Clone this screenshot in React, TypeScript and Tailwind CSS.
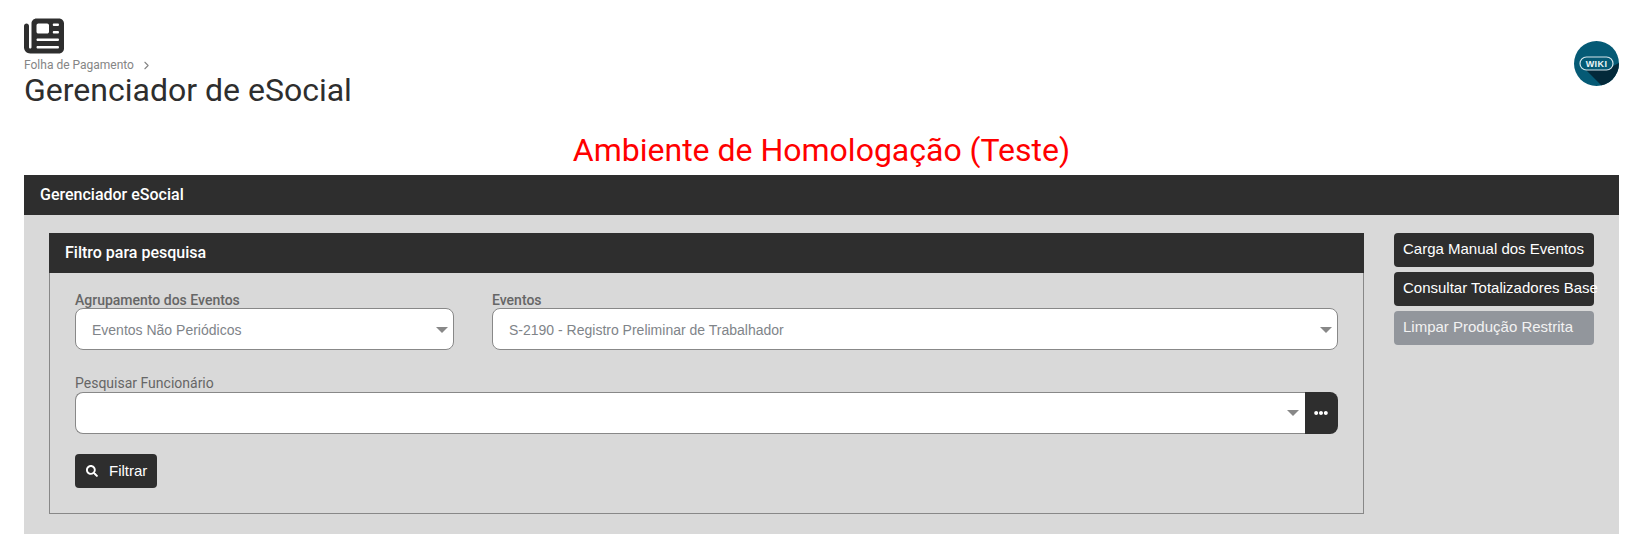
import React from 'react'
import { FaNewspaper } from 'react-icons/fa6'
import { FaSearch, FaEllipsisH } from 'react-icons/fa'
import { ChevronRight } from 'lucide-react'

const Caret = () => (
  <span className="w-0 h-0 border-x-[6px] border-x-transparent border-t-[6px] border-t-[#888888]" />
)

const WikiBadge = () => (
  <svg width="45" height="45" viewBox="0 0 45 45">
    <defs>
      <clipPath id="wiki-circle">
        <circle cx="22.5" cy="22.5" r="22.5" />
      </clipPath>
    </defs>
    <circle cx="22.5" cy="22.5" r="22.5" fill="#055a75" />
    <path d="M10 27 L35 27 L45 22 L45 45 L28 45 Z" fill="#03293a" clipPath="url(#wiki-circle)" />
    <rect x="6" y="16" width="33" height="13" rx="6.5" fill="#055a75" stroke="#d5e4ea" strokeWidth="1.2" />
    <text x="22.5" y="25.6" textAnchor="middle" fontSize="9" fontWeight="700" letterSpacing="0.4" fill="#eef5f7" fontFamily="'Liberation Sans', sans-serif">
      WIKI
    </text>
  </svg>
)

const actions = [
  { label: 'Carga Manual dos Eventos', color: 'bg-[#2e2e2e] text-white' },
  { label: 'Consultar Totalizadores Base', color: 'bg-[#2e2e2e] text-white' },
  { label: 'Limpar Produção Restrita', color: 'bg-[#92969c] text-[#f2f2f2]' },
]

const App: React.FC = () => {
  return (
    <div className="h-[534px] overflow-hidden bg-white pl-6 pr-[25px] font-['Roboto',sans-serif]">
      {/* Header */}
      <div className="flex justify-between h-[127px]">
        <div className="pt-4">
          <FaNewspaper className="w-10 h-10 text-[#2e2e2e]" />
          <div className="flex items-center h-[14px] mt-[2px] text-xs text-[#858585]">
            Folha de Pagamento
            <ChevronRight className="w-[13px] h-[13px] ml-[6px]" />
          </div>
          <h1 className="text-[32px] leading-[37px] text-[#2e2e2e]">Gerenciador de eSocial</h1>
        </div>
        <div className="pt-[41px]">
          <WikiBadge />
        </div>
      </div>

      <div className="h-12 pt-1 text-center text-[32px] leading-[38px] text-[#ff0000]">
        Ambiente de Homologação (Teste)
      </div>

      {/* Painel */}
      <div className="bg-[#d9d9d9] h-[359px]">
        <div className="h-10 flex items-center px-4 bg-[#2e2e2e] text-white text-base font-medium">
          Gerenciador eSocial
        </div>
        <div className="flex pt-[18px] pl-[25px]">
          <div className="w-[1315px] h-[281px] border border-[#888888] border-t-0">
            <div className="-mx-px h-10 flex items-center pl-4 bg-[#2e2e2e] text-white text-base font-medium">
              Filtro para pesquisa
            </div>
            <div className="px-[25px] pt-[19px]">
              <div className="flex gap-[38px]">
                <div className="w-[379px]">
                  <div className="h-[17px] text-sm leading-[17px] font-medium text-[#666666]">Agrupamento dos Eventos</div>
                  <div className="mt-[-1px] h-[42px] flex items-center justify-between pl-[16px] pr-[5px] pt-[1px] bg-white border border-[#888888] rounded-lg font-['Liberation_Sans',sans-serif] text-sm text-[#808489]">
                    Eventos Não Periódicos
                    <Caret />
                  </div>
                </div>
                <div className="flex-1">
                  <div className="h-[17px] text-sm leading-[17px] font-medium text-[#666666]">Eventos</div>
                  <div className="mt-[-1px] h-[42px] flex items-center justify-between pl-[16px] pr-[5px] pt-[1px] bg-white border border-[#888888] rounded-lg font-['Liberation_Sans',sans-serif] text-sm text-[#808489]">
                    S-2190 - Registro Preliminar de Trabalhador
                    <Caret />
                  </div>
                </div>
              </div>

              <div className="mt-[25px] h-[17px] text-sm leading-[17px] text-[#666666]">Pesquisar Funcionário</div>
              <div className="flex h-[42px]">
                <div className="flex-1 flex items-center justify-end pr-[6px] bg-white border border-[#888888] border-r-0 rounded-l-lg">
                  <Caret />
                </div>
                <div className="w-[33px] pr-[2px] flex items-center justify-center bg-[#2e2e2e] text-white rounded-r-lg">
                  <FaEllipsisH className="w-[14px] h-[14px]" />
                </div>
              </div>

              <button className="mt-5 w-[82px] h-[34px] flex items-center pl-[11px] gap-[11px] rounded bg-[#2e2e2e] text-white font-['Liberation_Sans',sans-serif] text-[15px]">
                <FaSearch className="w-[12px] h-[12px]" />
                Filtrar
              </button>
            </div>
          </div>

          {/* Botoes laterais */}
          <div className="ml-[30px] flex flex-col gap-[5px]">
            {actions.map((action) => (
              <div
                key={action.label}
                className={`w-[200px] h-[34px] flex items-center pl-[9px] pb-[2px] rounded whitespace-nowrap font-['Liberation_Sans',sans-serif] text-[15px] ${action.color}`}
              >
                {action.label}
              </div>
            ))}
          </div>
        </div>
      </div>
    </div>
  )
}

export default App
